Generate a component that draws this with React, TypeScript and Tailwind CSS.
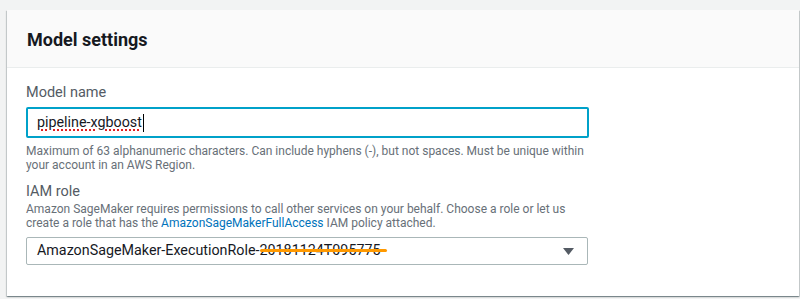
const font = { fontFamily: 'Roboto, "Open Sans", Arial, sans-serif' };

const ModelSettings = () => {
  return (
    <div
      className="h-[299px] w-[800px] overflow-hidden bg-[#f2f3f3] pt-[10px] pl-[7px] pr-[1px]"
      style={font}
    >
      <div className="bg-white shadow-[0_1px_1px_0_rgba(0,28,36,0.3),1px_1px_1px_0_rgba(0,28,36,0.15),-1px_1px_1px_0_rgba(0,28,36,0.15)]">
        <div className="flex h-[58px] items-center border-b border-[#eaeded] bg-[#fafafa] px-[20px] pt-[2px]">
          <h2 className="text-[18px] font-bold leading-[22px] text-[#16191f]">Model settings</h2>
        </div>

        <div className="px-[19px] pt-[14px] pb-[31px]">
          <label className="block text-[14.5px] leading-[22px] text-[#545b64]">Model name</label>
          <div className="mt-[3px] flex h-[31px] w-[563px] items-center rounded-[2px] border-2 border-[#00a1c9] px-[9px]">
            <span className="text-[14.3px] text-[#16191f] underline decoration-[#e02020] decoration-dotted decoration-[1.5px] underline-offset-[3px]">
              pipeline-xgboost
            </span>
            <span className="ml-[1px] h-[18px] w-px bg-black" />
          </div>
          <p className="mt-[6px] whitespace-nowrap text-[12px] leading-[14px] text-[#687078]">
            Maximum of 63 alphanumeric characters. Can include hyphens (-), but not spaces. Must be unique within
            <br />
            your account in an AWS Region.
          </p>

          <label className="mt-[9px] block text-[14.5px] leading-[22px] text-[#545b64]">IAM role</label>
          <p className="-mt-[1px] whitespace-nowrap text-[12px] leading-[14px] text-[#687078]">
            Amazon SageMaker requires permissions to call other services on your behalf. Choose a role or let us
            <br />
            create a role that has the <span className="text-[#0073bb]">AmazonSageMakerFullAccess</span> IAM policy
            attached.
          </p>
          <div className="mt-[7px] flex h-[28px] w-[562px] items-center justify-between rounded-[2px] border border-[#aab7b8] pl-[10px] pr-[13px]">
            <span className="text-[14.3px] text-[#16191f]">
              AmazonSageMaker-ExecutionRole-
              <span className="relative">
                20181124T095775
                <span className="absolute top-[7px] -right-[6px] left-0 h-[3px] rounded-full bg-[#ff9900]" />
              </span>
            </span>
            <svg width="11" height="7" viewBox="0 0 11 7">
              <polygon points="0,0 11,0 5.5,7" fill="#545b64" />
            </svg>
          </div>
        </div>
      </div>
    </div>
  );
};

export default function App() {
  return <ModelSettings />;
}
